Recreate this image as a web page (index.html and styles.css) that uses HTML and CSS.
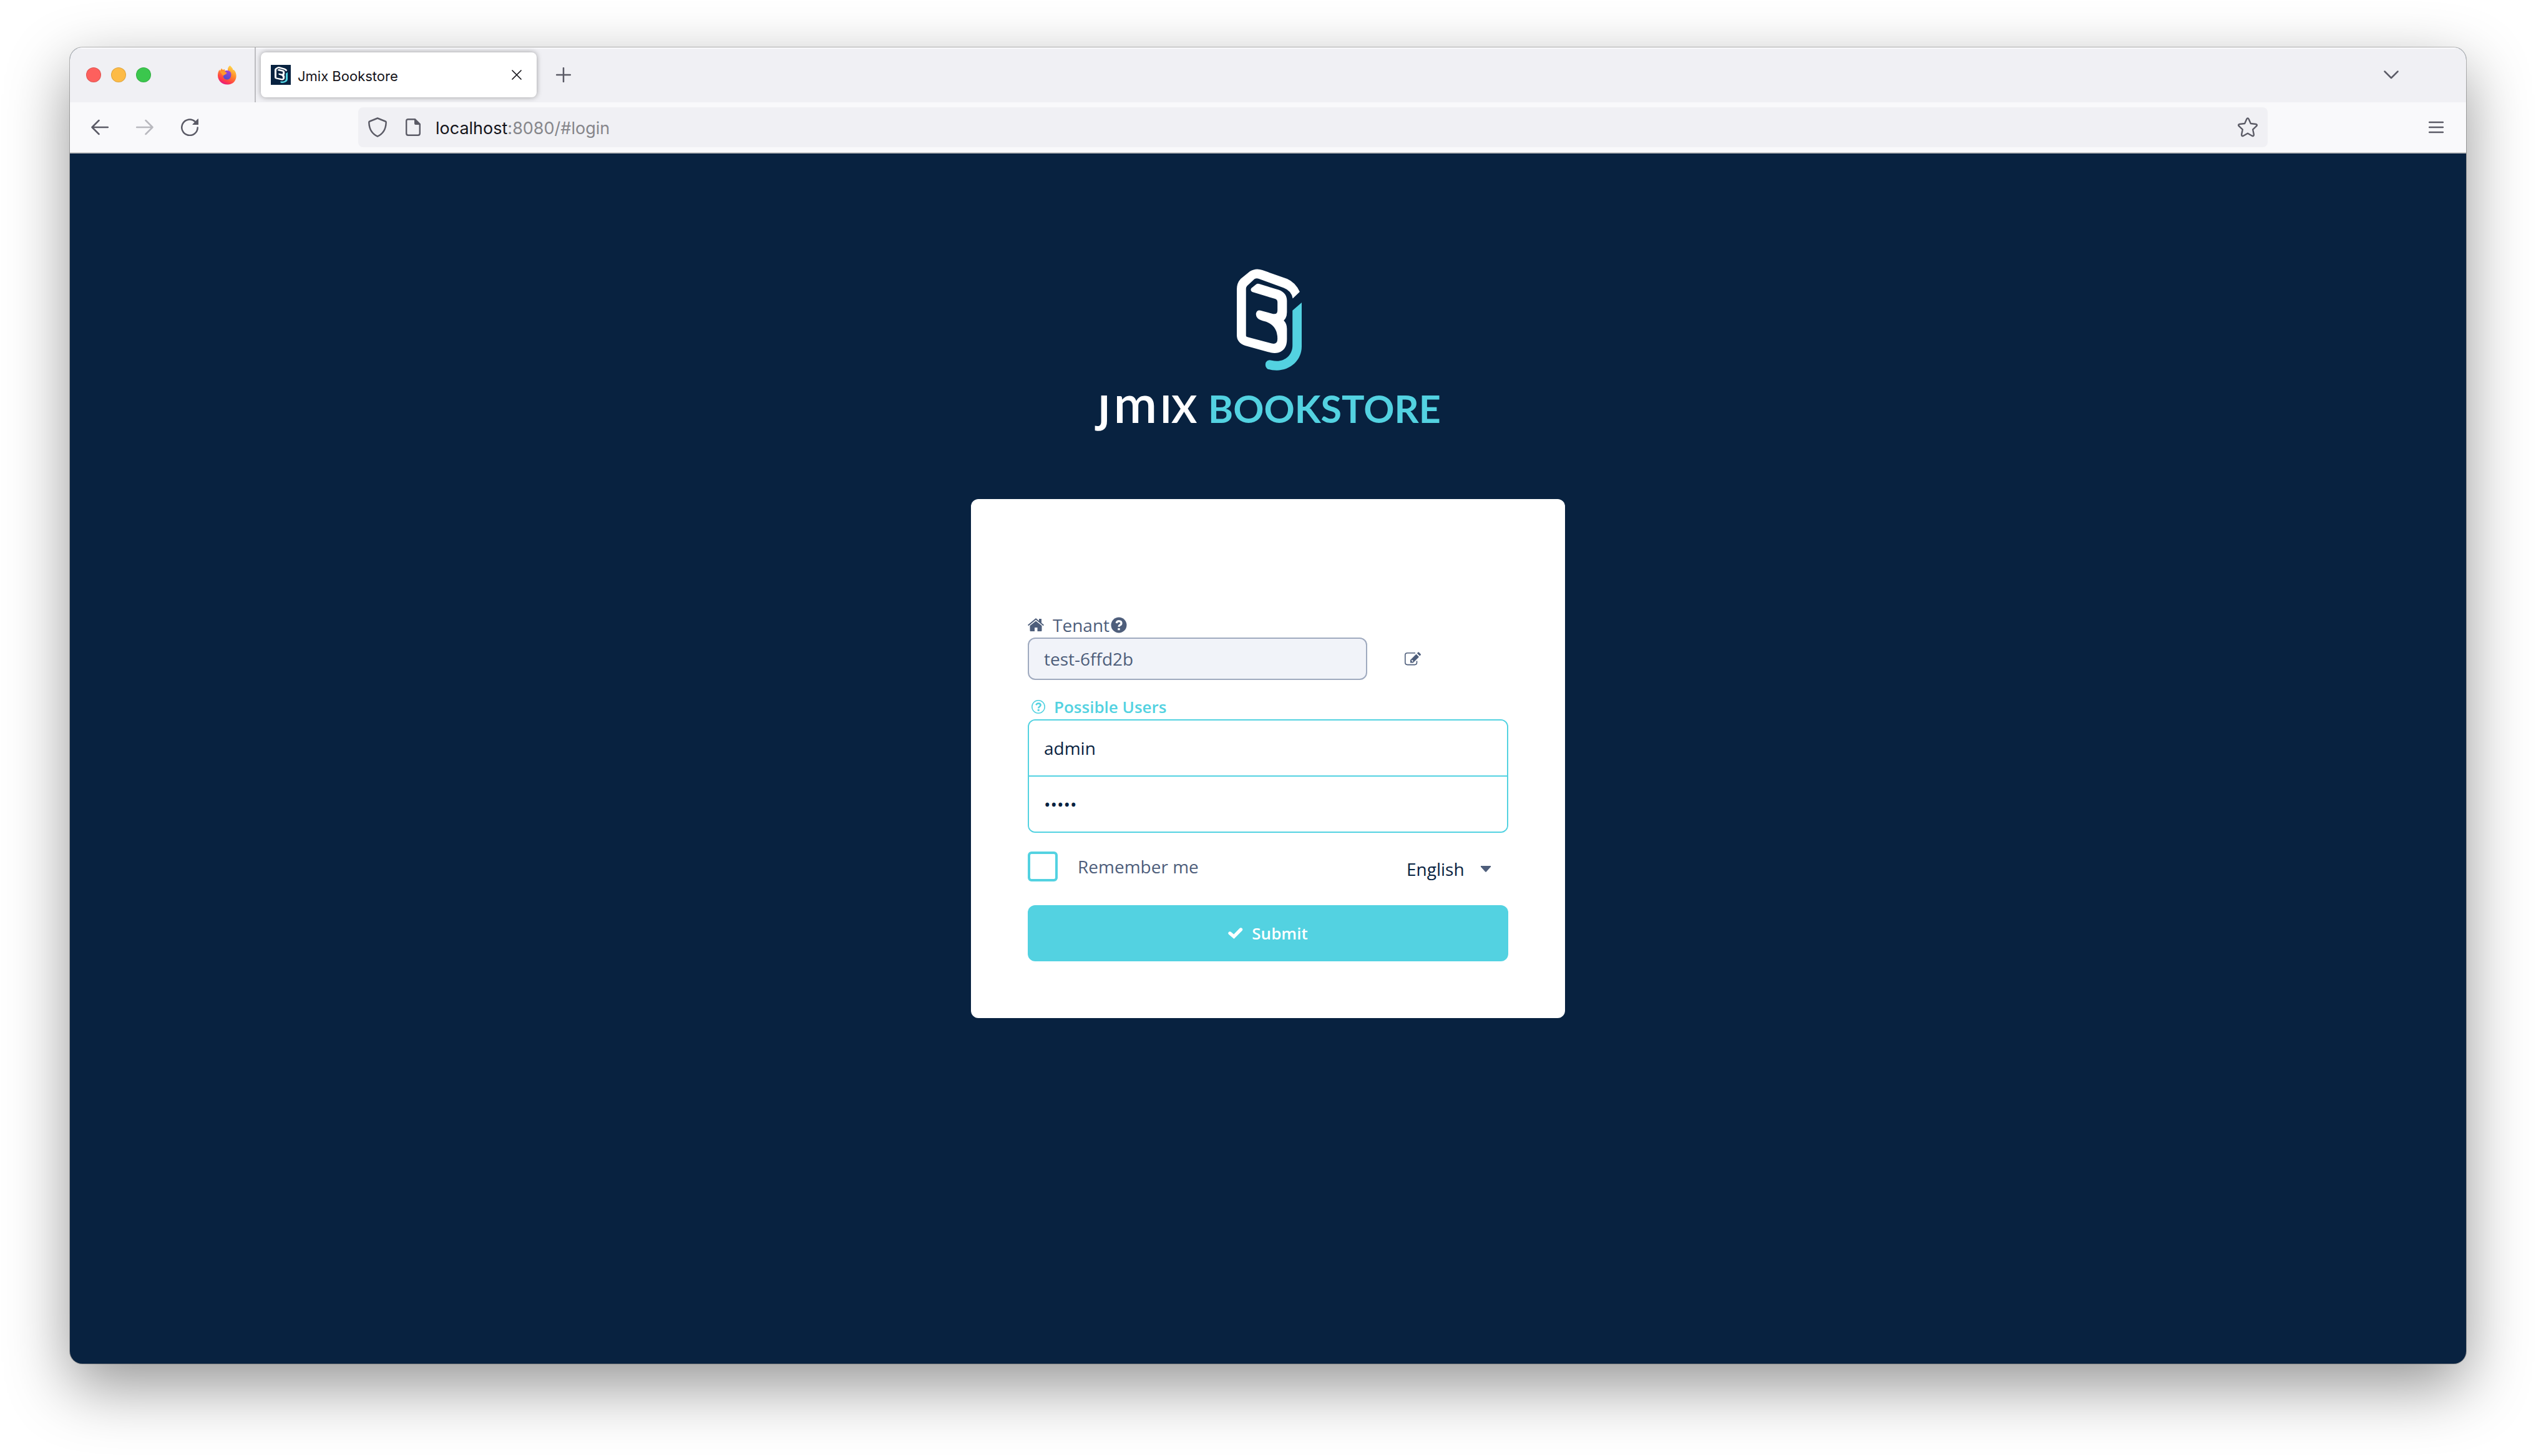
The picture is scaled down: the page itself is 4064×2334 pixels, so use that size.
FILE: index.html
```html
<!DOCTYPE html>
<html lang="en">
<head>
<meta charset="utf-8">
<title>Jmix Bookstore</title>
<link rel="stylesheet" href="styles.css">
</head>
<body>
<svg class="defs" aria-hidden="true">
  <symbol id="mark" viewBox="648 92 268 488" preserveAspectRatio="none">
    <path fill="#fff" d="M648 190Q648 160 664 140L702 104Q727 86 754 98L856 140Q890 157 908 202L879 234Q874 197 842 183L738 139Q729 135 721 141L690 174Q686 180 686 188V412Q686 417 692 419L792 450Q816 456 816 428Q816 356 755 341Q727 333 727 308Q730 288 746 292L798 308Q816 312 816 290V252Q816 240 806 236L712 203Q702 196 708 185L728 166Q733 161 740 164L822 193Q855 208 855 245V300Q855 326 842 340Q855 356 855 380V430Q855 480 820 494Q805 498 788 494L682 460Q648 446 648 410Z"/>
    <path fill="#53d2e1" d="M916 254V465C916 530 870 579 813 579Q793 579 776 573Q762 560 768 540Q776 526 792 531C840 545 878 510 878 460V292Z"/>
  </symbol>
</svg>

<div class="window">
  <header class="tabs">
    <div class="lights"><span class="light red"></span><span class="light amber"></span><span class="light green"></span></div>
    <div class="app">
      <svg width="32" height="32" viewBox="0 0 32 32" aria-hidden="true">
        <defs>
          <linearGradient id="fire" x1="0.8" y1="0" x2="0.3" y2="1"><stop offset="0" stop-color="#ffe14d"/><stop offset=".45" stop-color="#ff8a2a"/><stop offset=".8" stop-color="#ff3a4a"/><stop offset="1" stop-color="#e31587"/></linearGradient>
          <linearGradient id="globe" x1="0.7" y1="0" x2="0.4" y2="1"><stop offset="0" stop-color="#a440d8"/><stop offset="1" stop-color="#4a50cc"/></linearGradient>
        </defs>
        <path fill="url(#fire)" d="M20.500 1C23 3 25 6 25.500 8C27 7.500 28 9 28.500 10C31 14 31.500 20 29 24.500C26 30 21 31.500 16 31.500C8 31.500 1 25.500 1 17C1 13 2 10 4 7.500L4.500 10L7 5.500L9 8L12 7L12.500 9.500L17 9.500C16.500 5.500 18 3 20.500 1Z"/>
        <path fill="url(#globe)" d="M12 10.500C15 8 19 9 21 11C23.500 14 22.500 19 20.500 21.500C18 24.500 13 24 11 21.500C9.500 19.500 9.500 17.500 11 16L16 14L12.500 13Z"/>
        <path fill="#ff9a2c" d="M4 10L12 10.500L15.500 12.500L12 16L9 17Z"/>
      </svg>
    </div>
    <div class="tab">
      <span class="favicon"><svg width="21" height="26"><use href="#mark"/></svg></span>
      <span class="tab-title">Jmix Bookstore</span>
      <button class="icon-btn close" type="button" aria-label="Close tab"><svg width="16" height="16" viewBox="0 0 16 16"><path d="M1 1L15 15M15 1L1 15" fill="none" stroke="#15141a" stroke-width="1.700" stroke-linecap="round"/></svg></button>
    </div>
    <button class="icon-btn add" type="button" aria-label="New tab"><svg width="24" height="24" viewBox="0 0 24 24"><path d="M12 1V23M1 12H23" fill="none" stroke="#5b5b66" stroke-width="2.500" stroke-linecap="round"/></svg></button>
    <button class="icon-btn list" type="button" aria-label="List all tabs"><svg width="24" height="14" viewBox="0 0 24 14"><path d="M1.500 1.500L12 12L22.500 1.500" fill="none" stroke="#5b5b66" stroke-width="2.500" stroke-linecap="round" stroke-linejoin="round"/></svg></button>
  </header>

  <nav class="toolbar" aria-label="Navigation">
    <button class="icon-btn" type="button" aria-label="Back"><svg width="28" height="28" viewBox="0 0 28 28"><path d="M27 14H2M12.500 3L1.500 14L12.500 25" fill="none" stroke="#5b5b66" stroke-width="2.500" stroke-linecap="round" stroke-linejoin="round"/></svg></button>
    <button class="icon-btn" type="button" aria-label="Forward"><svg width="28" height="28" viewBox="0 0 28 28"><path d="M1 14H26M15.500 3L26.500 14L15.500 25" fill="none" stroke="#b9b9be" stroke-width="2.500" stroke-linecap="round" stroke-linejoin="round"/></svg></button>
    <button class="icon-btn" type="button" aria-label="Reload"><svg width="28" height="28" viewBox="0 0 28 28"><path d="M26.700 14.500A12.700 12.700 0 1 1 22.500 4.800" fill="none" stroke="#5b5b66" stroke-width="2.500" stroke-linecap="round"/><path d="M28 .8V10H19.200Q18 10 18.800 9L26.500 1Q28 -.2 28 .8Z" fill="#5b5b66"/></svg></button>
    <div class="address">
      <svg width="30" height="32" viewBox="0 0 30 32" aria-hidden="true"><path d="M15 1.500L27.500 6.500Q28.800 7 28.700 8.500C28.300 19 24 26.500 15 30.600C6 26.500 1.700 19 1.300 8.500Q1.200 7 2.500 6.500Z" fill="none" stroke="#5b5b66" stroke-width="2.500" stroke-linejoin="round"/></svg>
      <svg class="doc" width="24" height="28" viewBox="0 0 24 28" aria-hidden="true"><path d="M15 1.200H4.200Q1.200 1.200 1.200 4.200V23.800Q1.200 26.800 4.200 26.800H19.800Q22.800 26.800 22.800 23.800V9" fill="none" stroke="#5b5b66" stroke-width="2.400"/><path d="M14 0H15.500L24 8.500V10H16Q14 10 14 8Z" fill="#5b5b66"/></svg>
      <span class="url"><span class="host">localhost</span>:8080/#login</span>
      <svg class="star" width="32" height="32" viewBox="0 0 32 32" aria-hidden="true"><path d="M14.400 2.800Q16 0 17.600 2.800L20.800 10L29 11Q32 11.800 30 14.200L24.200 19.600L25.800 27.600Q26 30.800 23 29.800L16 25.800L9 29.800Q6 30.800 6.200 27.600L7.800 19.600L2 14.200Q0 11.800 3 11L11.200 10Z" fill="none" stroke="#5b5b66" stroke-width="2.400" stroke-linejoin="round"/></svg>
    </div>
    <button class="icon-btn" type="button" aria-label="Menu"><svg width="24" height="20" viewBox="0 0 24 20"><path d="M1 2H23M1 10H23M1 18H23" fill="none" stroke="#5b5b66" stroke-width="2.500" stroke-linecap="round"/></svg></button>
  </nav>

  <main class="page">
    <div class="brand">
      <svg class="brand-mark" aria-hidden="true"><use href="#mark"/></svg>
      <h1 class="wordmark"><span class="jmix"><span class="j">J</span><span class="m">m</span><span>IX</span></span> BOOKSTORE</h1>
    </div>

    <form class="card">
      <div class="label-row">
        <svg width="26" height="22" viewBox="0 0 26 22" aria-hidden="true"><path fill="#4e5e7b" d="M13 0L18 4.200V1H22V7.500L26 10.800L24.800 12.200L13 2.600L1.200 12.200L0 10.800Z"/><path fill="#4e5e7b" d="M13 4.400L22.500 12V20Q22.500 21 21.500 21H15.500V15H11V21H4.500Q3.500 21 3.500 20V12Z"/></svg>
        <label class="tenant-label" for="tenant">Tenant</label>
        <svg class="help" width="26" height="26" viewBox="0 0 26 26" aria-hidden="true"><circle cx="13" cy="13" r="12.500" fill="#4e5e7b"/><path d="M9 9.800Q10.200 6.700 13 6.700Q17 6.900 17 10Q17 12 14.800 13Q13 14 13 15.800" fill="none" stroke="#fff" stroke-width="3.200"/><path d="M11.300 18H14.700V21.200H11.300Z" fill="#fff"/></svg>
      </div>
      <div class="tenant-row">
        <input class="tenant" id="tenant" type="text" value="test-6ffd2b" readonly>
        <button class="icon-btn edit" type="button" aria-label="Edit tenant"><svg width="26" height="22" viewBox="0 0 26 22"><path d="M17 1.700H4.500Q.8 1.700 .8 5V17Q.8 20.600 4.500 20.600H16Q19.500 20.600 19.500 17V14.500" fill="none" stroke="#4e5e7b" stroke-width="1.600"/><path fill="#4e5e7b" fill-rule="evenodd" d="M9 17.500V13L18.500 3.500L23 8L13.500 17.500ZM10.800 14L12.600 15.900L13.900 14.600L11.900 12.700ZM19.800 2.300L21.500 .6Q22.300 0 23 .7L25.700 3.400Q26.300 4.200 25.700 5L24.200 6.600Z"/></svg></button>
      </div>

      <button class="users" type="button">
        <svg width="22" height="22" viewBox="0 0 22 22" aria-hidden="true"><circle cx="11" cy="11" r="10.200" fill="none" stroke="#53d2e1" stroke-width="1.600"/><path d="M7.300 8.200Q8.600 5.500 11.200 5.500Q14.600 5.700 14.600 8.300Q14.600 10 12.600 11Q11.200 11.900 11.200 13.500" fill="none" stroke="#53d2e1" stroke-width="2.600"/><path d="M9.700 15H12.700V17.800H9.700Z" fill="#53d2e1"/></svg>
        <span>Possible Users</span>
      </button>

      <div class="credentials">
        <input type="text" value="admin" aria-label="Username">
        <input type="password" value="admin" aria-label="Password">
      </div>

      <div class="options">
        <label class="remember"><input type="checkbox"><span>Remember me</span></label>
        <div class="language">
          <select aria-label="Language"><option>English</option></select>
          <svg width="16" height="10" viewBox="0 0 16 10" aria-hidden="true"><path fill="#4e5e7b" d="M0 0H16V1.500L9 9.200Q8 10.200 7 9.200L0 1.500Z"/></svg>
        </div>
      </div>

      <button class="submit" type="submit">
        <svg width="24" height="18" viewBox="0 0 24 18" aria-hidden="true"><path d="M3 9L9.300 14.300L20.500 3" fill="none" stroke="#fff" stroke-width="5.400" stroke-linecap="round" stroke-linejoin="miter"/></svg>
        <span>Submit</span>
      </button>
    </form>
  </main>
</div>
</body>
</html>
```
FILE: styles.css
```css
* { box-sizing: border-box; }

body {
  margin: 0;
  min-height: 100vh;
  padding: 76px 112px 148px;
  display: flex;
  background: #fff;
  font-family: "Open Sans", "Noto Sans", sans-serif;
  font-size: 28px;
  line-height: 40px;
  color: #4e5e7b;
}

button, input, select { font: inherit; color: inherit; margin: 0; }
button { border: 0; padding: 0; background: none; }
svg { display: block; flex: none; }
.defs { position: absolute; width: 0; height: 0; }

.window {
  flex: 1;
  display: flex;
  flex-direction: column;
  overflow: hidden;
  border-radius: 20px;
  background: #082240;
  box-shadow: 0 0 0 1px rgba(0, 0, 0, .25), 0 36px 100px rgba(0, 0, 0, .42);
}

/* Browser chrome */
.icon-btn { display: flex; align-items: center; justify-content: center; width: 72px; height: 64px; }

.tabs {
  display: flex;
  align-items: center;
  height: 88px;
  background: #f0f0f4;
  box-shadow: inset 0 2px #fafafc;
  font-family: Inter, "Liberation Sans", sans-serif;
}
.lights { display: flex; gap: 16px; padding-left: 26px; width: 236px; }
.light { width: 24px; height: 24px; border-radius: 50%; border: 1px solid rgba(0, 0, 0, .12); }
.red { background: #fd605d; }
.amber { background: #fdbb46; }
.green { background: #3bc74d; }
.app {
  display: flex;
  align-items: center;
  align-self: stretch;
  width: 62px;
  border-right: 2px solid #bdbdc1;
}
.tab {
  display: flex;
  align-items: center;
  width: 442px;
  height: 72px;
  margin-left: 8px;
  padding-left: 16px;
  border-radius: 8px;
  background: #fff;
  box-shadow: 0 0 8px rgba(0, 0, 0, .36);
}
.favicon { display: flex; align-items: center; justify-content: center; width: 32px; height: 32px; background: #082240; }
.tab-title { flex: 1; padding: 4px 0 0 11px; font-size: 22px; color: #15141a; }
.close { width: 64px; }
.add { margin-left: 7px; }
.list { margin-left: auto; margin-right: 84px; }

.toolbar {
  display: flex;
  align-items: center;
  height: 82px;
  padding: 0 12px;
  border-bottom: 2px solid #c6c6c6;
  background: #f9f9fb;
}
.address {
  flex: 1;
  display: flex;
  align-items: center;
  height: 64px;
  margin: 0 234px;
  padding: 0 16px;
  border-radius: 8px;
  background: #f0f0f4;
  font-family: Inter, "Liberation Sans", sans-serif;
}
.doc { margin-left: 30px; }
.url { margin-left: 24px; padding-top: 3px; font-size: 27px; color: #86868b; }
.host { color: #15141a; }
.star { margin-left: auto; }

/* Login page */
.page {
  flex: 1;
  display: grid;
  grid-template-rows: 1fr auto 1fr;
  justify-items: center;
}
.brand {
  align-self: end;
  display: flex;
  flex-direction: column;
  align-items: center;
  gap: 17px;
  padding: 0 0 101px 4px;
}
.brand-mark { width: 104px; height: 163px; }
.wordmark {
  margin: 0;
  font-family: Lato, "Open Sans", sans-serif;
  font-size: 61px;
  font-weight: 700;
  line-height: 88px;
  color: #53d2e1;
  white-space: nowrap;
}
.jmix { margin-right: 3px; color: #fff; }
.j { font-family: "Open Sans", sans-serif; }
.m { margin: 0 5px; font-size: 84px; font-weight: 600; line-height: 60px; }

.card {
  width: 952px;
  padding: 182px 91px 91px;
  border-radius: 12px;
  background: #fff;
}
.label-row { display: flex; align-items: center; }
.tenant-label { padding-left: 14px; }
.help { margin-left: 2px; }
.tenant-row { display: flex; align-items: center; }
.tenant {
  width: 544px;
  height: 68px;
  padding: 0 24px;
  border: 2px solid #9faabf;
  border-radius: 12px;
  background: #f1f3f9;
  outline: 0;
}
.edit { margin-left: 37px; }

.users {
  display: flex;
  align-items: center;
  gap: 14px;
  margin-top: 23px;
  padding-left: 6px;
  font-size: 26px;
  font-weight: 600;
  color: #53d2e1;
}
.credentials {
  border: 2px solid #53d2e1;
  border-radius: 12px;
  overflow: hidden;
  color: #082240;
}
.credentials input {
  display: block;
  width: 100%;
  height: 88px;
  padding: 0 24px;
  border: 0;
  background: #fff;
  outline: 0;
}
.credentials input + input { height: 90px; border-top: 2px solid #53d2e1; }

.options {
  display: flex;
  justify-content: space-between;
  align-items: flex-end;
  margin: 30px 0 38px;
}
.remember { display: flex; align-items: center; gap: 32px; }
.remember input {
  appearance: none;
  width: 48px;
  height: 48px;
  border: 4px solid #53d2e1;
  border-radius: 6px;
  background: #fff;
}
.language { display: flex; align-items: center; gap: 26px; padding-right: 28px; }
.language select { appearance: none; border: 0; padding: 0; background: none; color: #082240; }

.submit {
  display: flex;
  align-items: center;
  justify-content: center;
  gap: 14px;
  width: 100%;
  height: 90px;
  border-radius: 12px;
  background: #53d2e1;
  color: #fff;
  font-size: 26px;
  font-weight: 600;
}
```
